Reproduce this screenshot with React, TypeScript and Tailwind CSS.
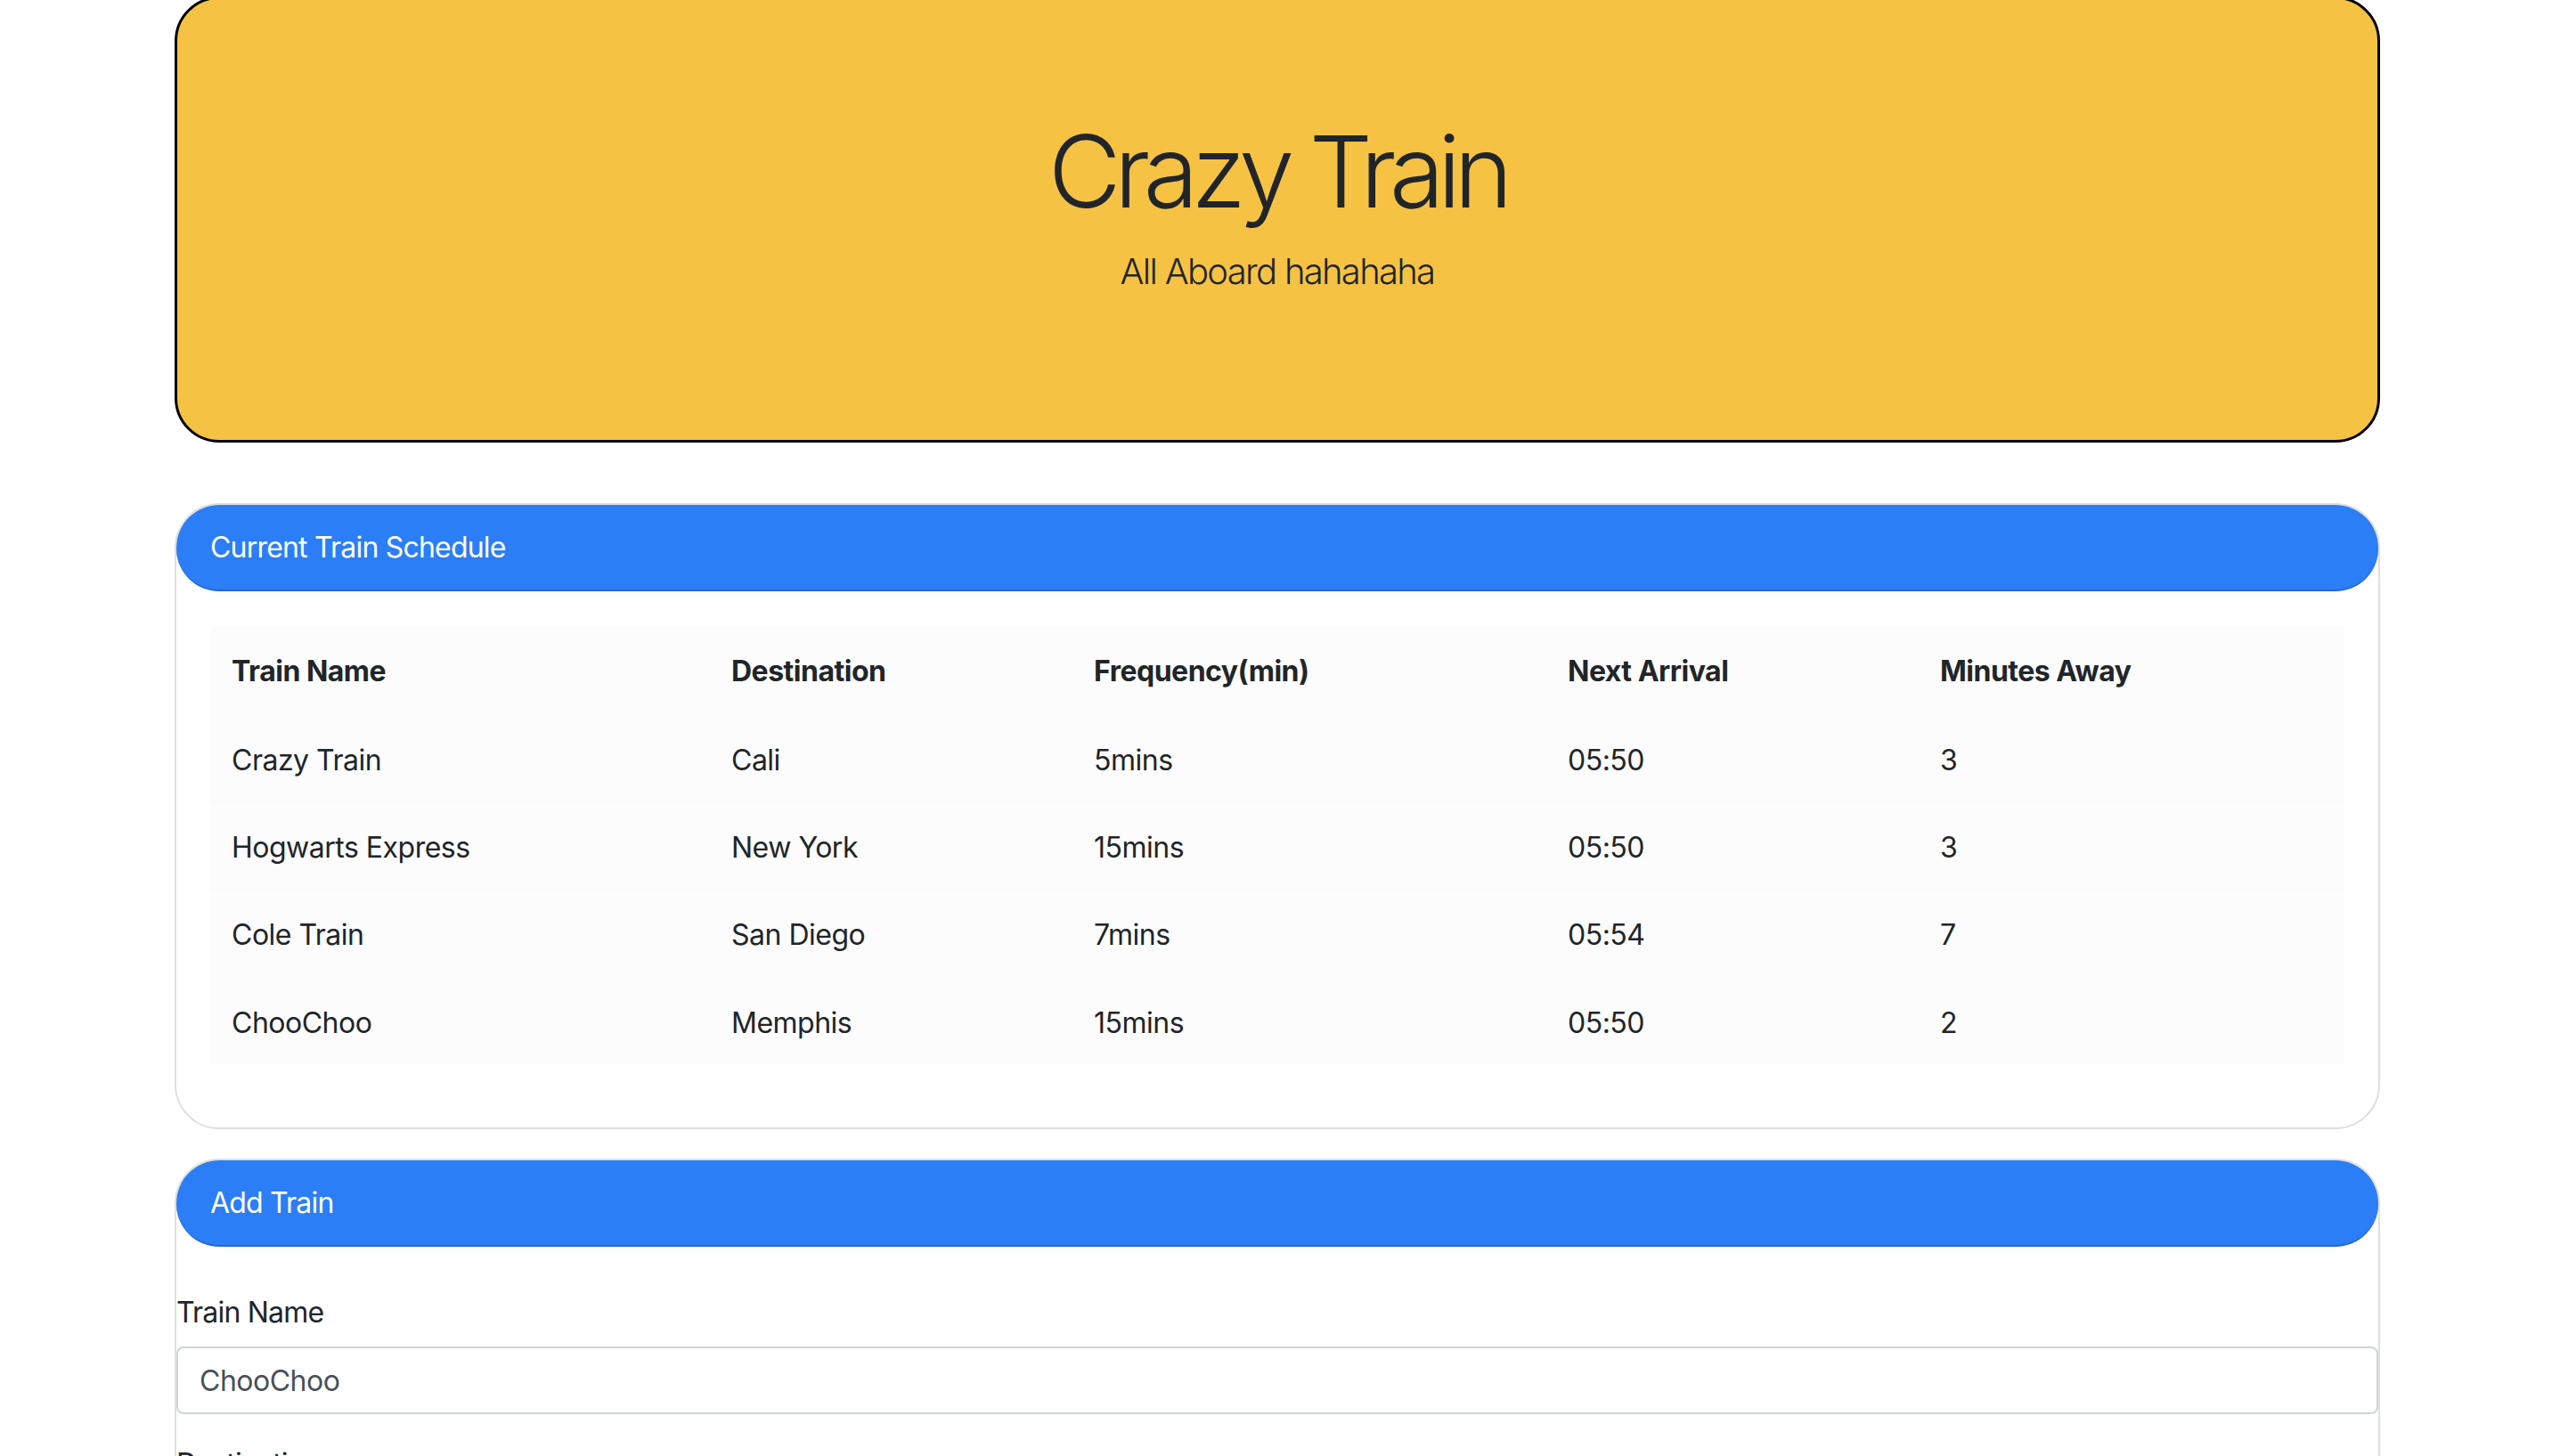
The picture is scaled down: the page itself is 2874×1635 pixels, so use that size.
import React from "react";

const rows = [
  ["Crazy Train", "Cali", "5mins", "05:50", "3"],
  ["Hogwarts Express", "New York", "15mins", "05:50", "3"],
  ["Cole Train", "San Diego", "7mins", "05:54", "7"],
  ["ChooChoo", "Memphis", "15mins", "05:50", "2"],
];

const colW = ["w-[561px]", "w-[407px]", "w-[532px]", "w-[418px]", "w-[478px]"];

export default function App() {
  return (
    <div
      className="w-full h-[1635px] overflow-hidden bg-white text-[#212529] tracking-[-0.5px]"
      style={{ fontFamily: 'Inter, "Noto Sans", sans-serif' }}
    >
      <div className="ml-[196px] w-[2476px]">
        {/* Jumbotron */}
        <div className="-mt-[4px] h-[501px] rounded-[50px] border-[3px] border-black bg-[#f6c244] pt-[126px] flex flex-col items-center">
          <h1 className="text-[112px] leading-[134px] font-light tracking-[-7.5px]">Crazy Train</h1>
          <p className="mt-[16px] text-[40px] leading-[60px] font-light tracking-[-1.7px]">All Aboard hahahaha</p>
        </div>

        {/* Schedule card */}
        <div className="mt-[68px] rounded-[50px] border-2 border-[#dfdfdf]">
          <div className="h-[97px] rounded-[48px] border-b-2 border-[#2466cc] bg-[#2b7ef5] pl-[38px] flex items-center text-[32px] text-white tracking-[-0.8px]">
            Current Train Schedule
          </div>
          <div className="pt-[40px] pb-[72px] pl-[38px] pr-[38px]">
            <table className="w-full bg-[#fcfcfc] text-[32px] border-collapse">
              <thead>
                <tr className="h-[98px]">
                  {["Train Name", "Destination", "Frequency(min)", "Next Arrival", "Minutes Away"].map((h, i) => (
                    <th key={h} className={`${colW[i]} px-[24px] pt-[2px] text-left font-bold`}>
                      {h}
                    </th>
                  ))}
                </tr>
              </thead>
              <tbody>
                {rows.map((r) => (
                  <tr key={r[0]} className="h-[98px] border-t-2 border-[#fafafa]">
                    {r.map((c, i) => (
                      <td key={i} className="px-[24px] pt-[6px]">
                        {c}
                      </td>
                    ))}
                  </tr>
                ))}
              </tbody>
            </table>
          </div>
        </div>

        {/* Add train card */}
        <div className="mt-[33px] h-[400px] rounded-t-[50px] border-2 border-b-0 border-[#dfdfdf]">
          <div className="h-[97px] rounded-[48px] border-b-2 border-[#2466cc] bg-[#2b7ef5] pl-[38px] flex items-center text-[32px] text-white tracking-[-0.8px]">
            Add Train
          </div>
          <div className="pt-[50px]">
            <label className="block text-[32px] leading-[48px] mb-[14px] tracking-[-0.8px]">Train Name</label>
            <input
              readOnly
              value="ChooChoo"
              className="block w-full h-[76px] rounded-[8px] border-2 border-[#ced4da] px-[24px] text-[32px] text-[#495057] outline-none tracking-[-0.5px]"
              style={{ fontFamily: 'Inter, "Noto Sans", sans-serif' }}
            />
            <label className="block mt-[32px] text-[32px] leading-[48px] tracking-[-0.8px]">Destination</label>
          </div>
        </div>
      </div>
    </div>
  );
}
